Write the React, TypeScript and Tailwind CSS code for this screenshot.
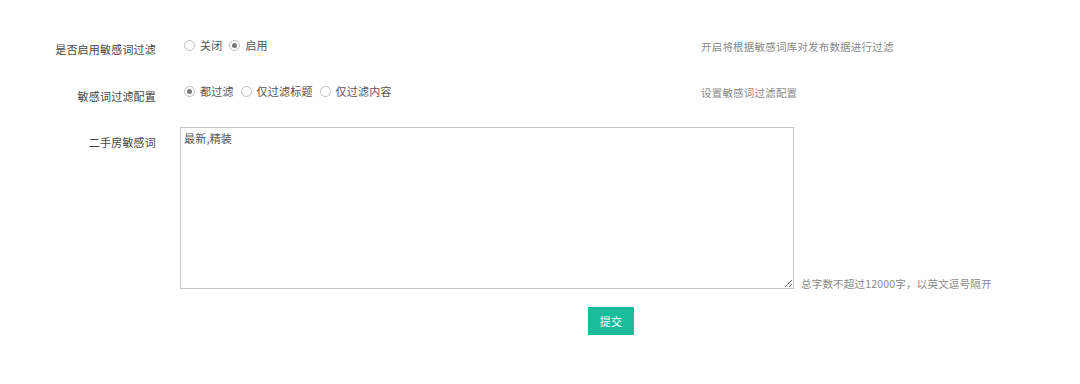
import React from 'react';

const Radio = ({ checked, label }: { checked?: boolean; label: string }) => (
  <label className="flex items-center gap-[5px] mr-[7px]">
    <span className="w-[11px] h-[11px] rounded-full border border-[#c0c0c0] bg-white flex items-center justify-center">
      {checked && <span className="w-[5px] h-[5px] rounded-full bg-[#777]" />}
    </span>
    <span>{label}</span>
  </label>
);

const App = () => {
  return (
    <div
      className="w-[1080px] h-[384px] bg-white pt-[38px] text-[11px] tracking-[0.2px] text-[#555]"
      style={{ fontFamily: '"Noto Sans CJK SC", "Noto Sans", sans-serif' }}
    >
      {/* 是否启用 */}
      <div className="flex items-start">
        <div className="w-[156px] text-right leading-[22px] text-[#444]">是否启用敏感词过滤</div>
        <div className="w-[521px] ml-[24px] pl-[4px] flex items-center h-[14px] leading-[14px]">
          <Radio label="关闭" />
          <Radio checked label="启用" />
        </div>
        <div className="leading-[18px] text-[#888] text-[10.5px]">开启将根据敏感词库对发布数据进行过滤</div>
      </div>

      {/* 过滤配置 */}
      <div className="flex items-start mt-[25px]">
        <div className="w-[156px] text-right leading-[22px] text-[#444]">敏感词过滤配置</div>
        <div className="w-[521px] ml-[24px] pl-[4px] flex items-center h-[12px] leading-[12px]">
          <Radio checked label="都过滤" />
          <Radio label="仅过滤标题" />
          <Radio label="仅过滤内容" />
        </div>
        <div className="leading-[16px] text-[#888] text-[10.5px]">设置敏感词过滤配置</div>
      </div>

      {/* 敏感词 */}
      <div className="flex items-start mt-[20px]">
        <div className="w-[156px] text-right leading-[22px] pt-[4px] text-[#444]">二手房敏感词</div>
        <textarea
          defaultValue="最新,精装"
          className="ml-[24px] w-[614px] h-[162px] border border-[#c6c6c6] px-[3px] py-[2px] text-[11px] leading-[16px] text-[#555] outline-none"
          style={{ fontFamily: '"Noto Sans CJK SC", "Noto Sans", sans-serif' }}
        />
        <div className="self-end ml-[7px] mb-[-2px] leading-[14px] text-[#888] text-[10.5px]">总字数不超过12000字，以英文逗号隔开</div>
      </div>

      <div className="pl-[588px] mt-[18px]">
        <button className="w-[46px] h-[28px] bg-[#1abc9c] text-white text-[11px] flex items-center justify-center">
          提交
        </button>
      </div>
    </div>
  );
};

export default App;
